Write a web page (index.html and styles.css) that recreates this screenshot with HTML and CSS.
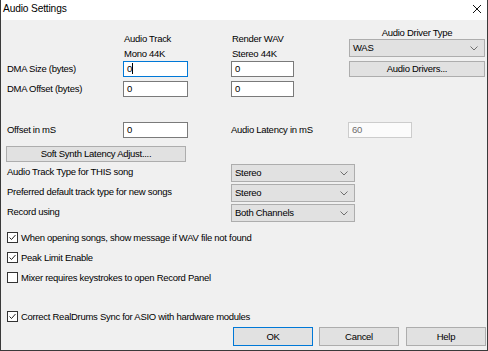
FILE: index.html
```html
<!DOCTYPE html>
<html>
<head>
<meta charset="utf-8">
<link rel="stylesheet" href="styles.css">
</head>
<body>
<div class="window">
  <div class="titlebar">
    <span class="title">Audio Settings</span>
    <svg class="close" width="10" height="10" viewBox="0 0 10 10"><path d="M1 1L9 9M9 1L1 9" stroke="#111" stroke-width="1" fill="none"/></svg>
  </div>
  <div class="content">
    <div class="top">
      <div class="col labels">
        <div class="lbl">DMA Size (bytes)</div>
        <div class="lbl">DMA Offset (bytes)</div>
      </div>
      <div class="col track">
        <div class="head">Audio Track</div>
        <div class="head">Mono 44K</div>
        <div class="edit focus">0<span class="caret"></span></div>
        <div class="edit">0</div>
      </div>
      <div class="col render">
        <div class="head">Render WAV</div>
        <div class="head">Stereo 44K</div>
        <div class="edit">0</div>
        <div class="edit">0</div>
      </div>
      <div class="col driver">
        <div class="dhead">Audio Driver Type</div>
        <div class="combo">WAS<svg class="chev" width="8" height="5" viewBox="0 0 8 5"><path d="M0.5 0.5L4 4L7.5 0.5" stroke="#6f6f6f" fill="none"/></svg></div>
        <div class="btn drivers">Audio Drivers...</div>
      </div>
    </div>

    <div class="offset-row">
      <div class="lbl w-label">Offset in mS</div>
      <div class="edit w-edit">0</div>
      <div class="lbl w-lat">Audio Latency in mS</div>
      <div class="edit disabled w-edit2">60</div>
    </div>

    <div class="btn softsynth">Soft Synth Latency Adjust....</div>

    <div class="combos">
      <div class="crow">
        <div class="lbl w-clabel">Audio Track Type for THIS song</div>
        <div class="combo w-combo">Stereo<svg class="chev" width="8" height="5" viewBox="0 0 8 5"><path d="M0.5 0.5L4 4L7.5 0.5" stroke="#6f6f6f" fill="none"/></svg></div>
      </div>
      <div class="crow">
        <div class="lbl w-clabel">Preferred default track type for new songs</div>
        <div class="combo w-combo">Stereo<svg class="chev" width="8" height="5" viewBox="0 0 8 5"><path d="M0.5 0.5L4 4L7.5 0.5" stroke="#6f6f6f" fill="none"/></svg></div>
      </div>
      <div class="crow">
        <div class="lbl w-clabel">Record using</div>
        <div class="combo w-combo">Both Channels<svg class="chev" width="8" height="5" viewBox="0 0 8 5"><path d="M0.5 0.5L4 4L7.5 0.5" stroke="#6f6f6f" fill="none"/></svg></div>
      </div>
    </div>

    <div class="checks">
      <div class="check"><span class="box"><svg width="9" height="9" viewBox="0 0 9 9"><path d="M1.5 4.5L3.5 6.5L7.5 2" stroke="#222" stroke-width="1" fill="none"/></svg></span>When opening songs, show message if WAV file not found</div>
      <div class="check"><span class="box"><svg width="9" height="9" viewBox="0 0 9 9"><path d="M1.5 4.5L3.5 6.5L7.5 2" stroke="#222" stroke-width="1" fill="none"/></svg></span>Peak Limit Enable</div>
      <div class="check"><span class="box"></span>Mixer requires keystrokes to open Record Panel</div>
      <div class="check last"><span class="box"><svg width="9" height="9" viewBox="0 0 9 9"><path d="M1.5 4.5L3.5 6.5L7.5 2" stroke="#222" stroke-width="1" fill="none"/></svg></span>Correct RealDrums Sync for ASIO with hardware modules</div>
    </div>

    <div class="buttons">
      <div class="btn dlg default">OK</div>
      <div class="btn dlg">Cancel</div>
      <div class="btn dlg help">Help</div>
    </div>
  </div>
</div>
</body>
</html>
```

FILE: styles.css
```css
* { box-sizing: border-box; }
html, body { margin: 0; padding: 0; }
body {
  width: 488px;
  height: 351px;
  overflow: hidden;
  font-family: "Liberation Sans", Arial, sans-serif;
  font-size: 9.5px;
  letter-spacing: -0.28px;
  color: #000;
}
.window {
  width: 488px;
  height: 351px;
  background: #f0f0f0;
  border-left: 1px solid #3a3a3a;
  border-right: 1px solid #3a3a3a;
  border-bottom: 1px solid #3a3a3a;
  display: flex;
  flex-direction: column;
}
.titlebar {
  height: 20px;
  background: #fff;
  display: flex;
  align-items: center;
  justify-content: space-between;
  padding: 0 5px 3px 2px;
}
.title {
  font-size: 10.2px;
  letter-spacing: -0.15px;
}
.close { display: block; }
.content {
  flex: 1;
  display: flex;
  flex-direction: column;
  padding: 0 1px 0 6px;
}
.top { display: flex; }
.col { display: flex; flex-direction: column; }
.labels { width: 116px; padding-top: 41px; gap: 4px; }
.lbl { height: 16px; line-height: 16px; white-space: nowrap; }
.track { width: 65px; padding-top: 11px; }
.render { width: 63px; margin-left: 43px; padding-top: 11px; }
.head { height: 15px; line-height: 15px; padding-left: 1px; white-space: nowrap; }
.track .edit + .edit, .render .edit + .edit { margin-top: 4px; }
.driver { width: 136px; margin-left: 55px; padding-top: 7px; }
.dhead { height: 12px; line-height: 12px; text-align: center; }
.edit {
  height: 16px;
  line-height: 14px;
  border: 1px solid #7a7a7a;
  background: #fff;
  padding-left: 3px;
}
.edit.focus { border-color: #0078d7; }
.caret {
  display: inline-block;
  width: 1px;
  height: 11px;
  background: #000;
  vertical-align: -2px;
}
.edit.disabled {
  border-color: #cccccc;
  color: #6d6d6d;
  background: #fbfbfb;
}
.combo {
  height: 18px;
  line-height: 16px;
  border: 1px solid #adadad;
  background: #e1e1e1;
  padding-left: 3px;
  display: flex;
  justify-content: space-between;
  align-items: center;
  padding-right: 6px;
}
.chev { display: block; }
.btn {
  height: 16px;
  line-height: 14px;
  border: 1px solid #adadad;
  background: #e1e1e1;
  text-align: center;
}
.drivers { margin-top: 4px; }
.offset-row { display: flex; margin-top: 25px; }
.w-label { width: 116px; }
.w-edit { width: 65px; }
.w-lat { width: 117px; margin-left: 43px; }
.w-edit2 { width: 64px; }
.softsynth { width: 180px; margin-left: -1px; margin-top: 8px; }
.combos { display: flex; flex-direction: column; gap: 2px; margin-top: 2px; }
.crow { display: flex; align-items: center; height: 18px; }
.w-clabel { width: 224px; height: 18px; line-height: 16px; }
.w-combo { width: 124px; }
.checks { display: flex; flex-direction: column; margin-top: 5px; }
.check {
  height: 20px;
  display: flex;
  align-items: center;
  white-space: nowrap;
}
.check.last { margin-top: 19px; }
.box {
  width: 11px;
  height: 11px;
  border: 1px solid #333;
  background: #fff;
  margin-right: 3px;
  display: flex;
  align-items: center;
  justify-content: center;
}
.box svg { display: block; }
.buttons {
  display: flex;
  justify-content: flex-end;
  margin-top: 1px;
}
.dlg { width: 80px; height: 19px; line-height: 17px; margin-left: 6px; }
.dlg.help { margin-left: 7px; }
.dlg.default { border-color: #0078d7; }
```
